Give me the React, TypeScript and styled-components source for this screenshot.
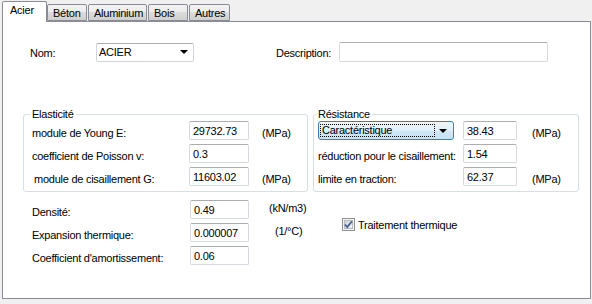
import React from 'react';
import styled, {createGlobalStyle} from 'styled-components';

const GlobalStyle = createGlobalStyle`
  html, body {
    margin: 0;
    background: #f0f0f0;
  }
  body {
    font-family: "Liberation Sans", Arial, sans-serif;
    font-size: 11px;
    letter-spacing: -0.25px;
    color: #000;
  }
`;

const Window = styled.div`
  width: 589px;
  margin-left: 2px;
`;

const TabStrip = styled.div`
  display: flex;
  align-items: flex-end;
  height: 21px;
  position: relative;
  z-index: 1;
`;

type TabProps = {
	$w: number;
	$active?: boolean;
};
const Tab = styled.div<TabProps>`
  box-sizing: border-box;
  width: ${props => props.$w}px;
  height: ${props => props.$active ? 21 : 17}px;
  margin-bottom: ${props => props.$active ? -1 : 0}px;
  margin-right: ${props => props.$active ? 0 : 1}px;
  padding: ${props => props.$active ? '2px 0 0 7px' : '2px 0 0 5px'};
  border: 1px solid #898c95;
  border-bottom: ${props => props.$active ? 'none' : '1px solid #898c95'};
  border-radius: 2px 2px 0 0;
  background: ${props => props.$active ? '#fff' : 'linear-gradient(#f3f3f3, #ebebeb 50%, #dddddd 50%, #cfcfcf)'};
  white-space: nowrap;
  &:last-child {
    margin-right: 0;
  }
`;

const Panel = styled.div`
  box-sizing: border-box;
  height: 278px;
  border: 1px solid #898c95;
  background: #fff;
  padding: 20px 0 0 0;
`;

const TopRow = styled.div`
  display: flex;
  align-items: center;
  padding-left: 27px;
`;

const TopLabel = styled.span<{$w: number; $ml?: number}>`
  width: ${props => props.$w}px;
  margin-left: ${props => props.$ml ?? 0}px;
  padding-top: 1px;
`;

const TextBox = styled.div<{$w: number; $h?: number}>`
  box-sizing: border-box;
  width: ${props => props.$w}px;
  height: ${props => props.$h ?? 19}px;
  border: 1px solid #d5d9e0;
  border-top-color: #abadb3;
  border-radius: 2px;
  background: #fff;
  padding: 3px 0 0 3px;
  white-space: nowrap;
`;

const Combo = styled.div<{$w: number}>`
  box-sizing: border-box;
  width: ${props => props.$w}px;
  height: 19px;
  display: flex;
  align-items: center;
  justify-content: space-between;
  border: 1px solid #cfd3da;
  border-top-color: #abadb3;
  border-radius: 2px;
  background: #fff;
  padding: 0 5px 0 2px;
`;

const HotCombo = styled(Combo)`
  border: 1px solid #3c7fb1;
  border-radius: 3px;
  background: linear-gradient(#eef7fd, #dff0fb 50%, #cfe8f9 50%, #c6e3f7);
  padding: 0 6px 0 1px;
`;

const FocusText = styled.span`
  box-sizing: border-box;
  width: 115px;
  height: 13px;
  border: 1px dotted #000;
  padding-left: 1px;
  line-height: 11px;
`;

const Arrow = styled.span`
  width: 0;
  height: 0;
  border-left: 4px solid transparent;
  border-right: 4px solid transparent;
  border-top: 4px solid #000;
`;

const Groups = styled.div`
  display: flex;
  gap: 5px;
  margin: 46px 0 0 20px;
`;

const Group = styled.fieldset<{$w: number; $pl: number}>`
  box-sizing: border-box;
  width: ${props => props.$w}px;
  margin: 0;
  padding: 0 4px 5px ${props => props.$pl}px;
  border: 1px solid #d5dfe5;
  border-radius: 3px;
  min-width: 0;
`;

const Legend = styled.legend`
  padding: 0 2px;
  margin-left: -2px;
  line-height: 13px;
`;

const FieldGrid = styled.div<{$cols: string}>`
  display: grid;
  grid-template-columns: ${props => props.$cols};
  grid-auto-rows: 19px;
  row-gap: 4px;
  align-items: center;
`;

const Label = styled.span<{$indent?: number}>`
  padding-top: 4px;
  padding-left: ${props => props.$indent ?? 0}px;
  white-space: nowrap;
`;

const Unit = styled.span<{$indent?: number; $raise?: boolean}>`
  padding-left: ${props => props.$indent ?? 0}px;
  padding-top: ${props => props.$raise ? 0 : 4}px;
  padding-bottom: ${props => props.$raise ? 4 : 0}px;
  white-space: nowrap;
`;

const Bottom = styled.div`
  display: flex;
  align-items: flex-start;
  margin: 8px 0 0 29px;
`;

const CheckRow = styled.label`
  display: flex;
  align-items: center;
  gap: 3px;
  margin: 18px 0 0 13px;
`;

const CheckBox = () => (
	<svg width="13" height="13" viewBox="0 0 13 13">
		<defs>
			<linearGradient id="cbg" x1="0" y1="0" x2="1" y2="1">
				<stop offset="0" stopColor="#cbcfd5"/>
				<stop offset="1" stopColor="#f6f6f6"/>
			</linearGradient>
		</defs>
		<rect x="0.5" y="0.5" width="12" height="12" fill="#f4f4f4" stroke="#8f8f8f"/>
		<rect x="2.5" y="2.5" width="8" height="8" fill="url(#cbg)" stroke="#b6b9be"/>
		<path d="M3 6.5 L5.2 9 L10 3.2" fill="none" stroke="#4a5f97" strokeWidth="1.8"/>
	</svg>
);

const App: React.FC = () => {
	return (
		<>
			<GlobalStyle/>
			<Window>
				<TabStrip>
					<Tab $w={45} $active>Acier</Tab>
					<Tab $w={40}>Béton</Tab>
					<Tab $w={59}>Aluminium</Tab>
					<Tab $w={40}>Bois</Tab>
					<Tab $w={41}>Autres</Tab>
				</TabStrip>
				<Panel>
					<TopRow>
						<TopLabel $w={66}>Nom:</TopLabel>
						<Combo $w={98}>
							<span>ACIER</span>
							<Arrow/>
						</Combo>
						<TopLabel $w={63} $ml={82}>Description:</TopLabel>
						<TextBox $w={209} $h={20}/>
					</TopRow>
					<Groups>
						<Group $w={285} $pl={8}>
							<Legend>Elasticité</Legend>
							<FieldGrid $cols="157px 60px 73px">
								<Label>module de Young E:</Label>
								<TextBox $w={60}>29732.73</TextBox>
								<Unit $indent={13}>(MPa)</Unit>
								<Label>coefficient de Poisson v:</Label>
								<TextBox $w={60}>0.3</TextBox>
								<span/>
								<Label $indent={2}>module de cisaillement G:</Label>
								<TextBox $w={60}>11603.02</TextBox>
								<Unit $indent={13}>(MPa)</Unit>
							</FieldGrid>
						</Group>
						<Group $w={266} $pl={4}>
							<Legend>Résistance</Legend>
							<FieldGrid $cols="145px 54px 60px">
								<HotCombo $w={136}>
									<FocusText>Caractéristique</FocusText>
									<Arrow/>
								</HotCombo>
								<TextBox $w={54}>38.43</TextBox>
								<Unit $indent={15}>(MPa)</Unit>
								<Label>réduction pour le cisaillement:</Label>
								<TextBox $w={54}>1.54</TextBox>
								<span/>
								<Label>limite en traction:</Label>
								<TextBox $w={54}>62.37</TextBox>
								<Unit $indent={15}>(MPa)</Unit>
							</FieldGrid>
						</Group>
					</Groups>
					<Bottom>
						<FieldGrid $cols="158px 59px 80px">
							<Label>Densité:</Label>
							<TextBox $w={59}>0.49</TextBox>
							<Unit $indent={20} $raise>(kN/m3)</Unit>
							<Label>Expansion thermique:</Label>
							<TextBox $w={59}>0.000007</TextBox>
							<Unit $indent={26} $raise>(1/°C)</Unit>
							<Label>Coefficient d'amortissement:</Label>
							<TextBox $w={59}>0.06</TextBox>
							<span/>
						</FieldGrid>
						<CheckRow>
							<CheckBox/>
							<span>Traitement thermique</span>
						</CheckRow>
					</Bottom>
				</Panel>
			</Window>
		</>
	);
};

export default App;
